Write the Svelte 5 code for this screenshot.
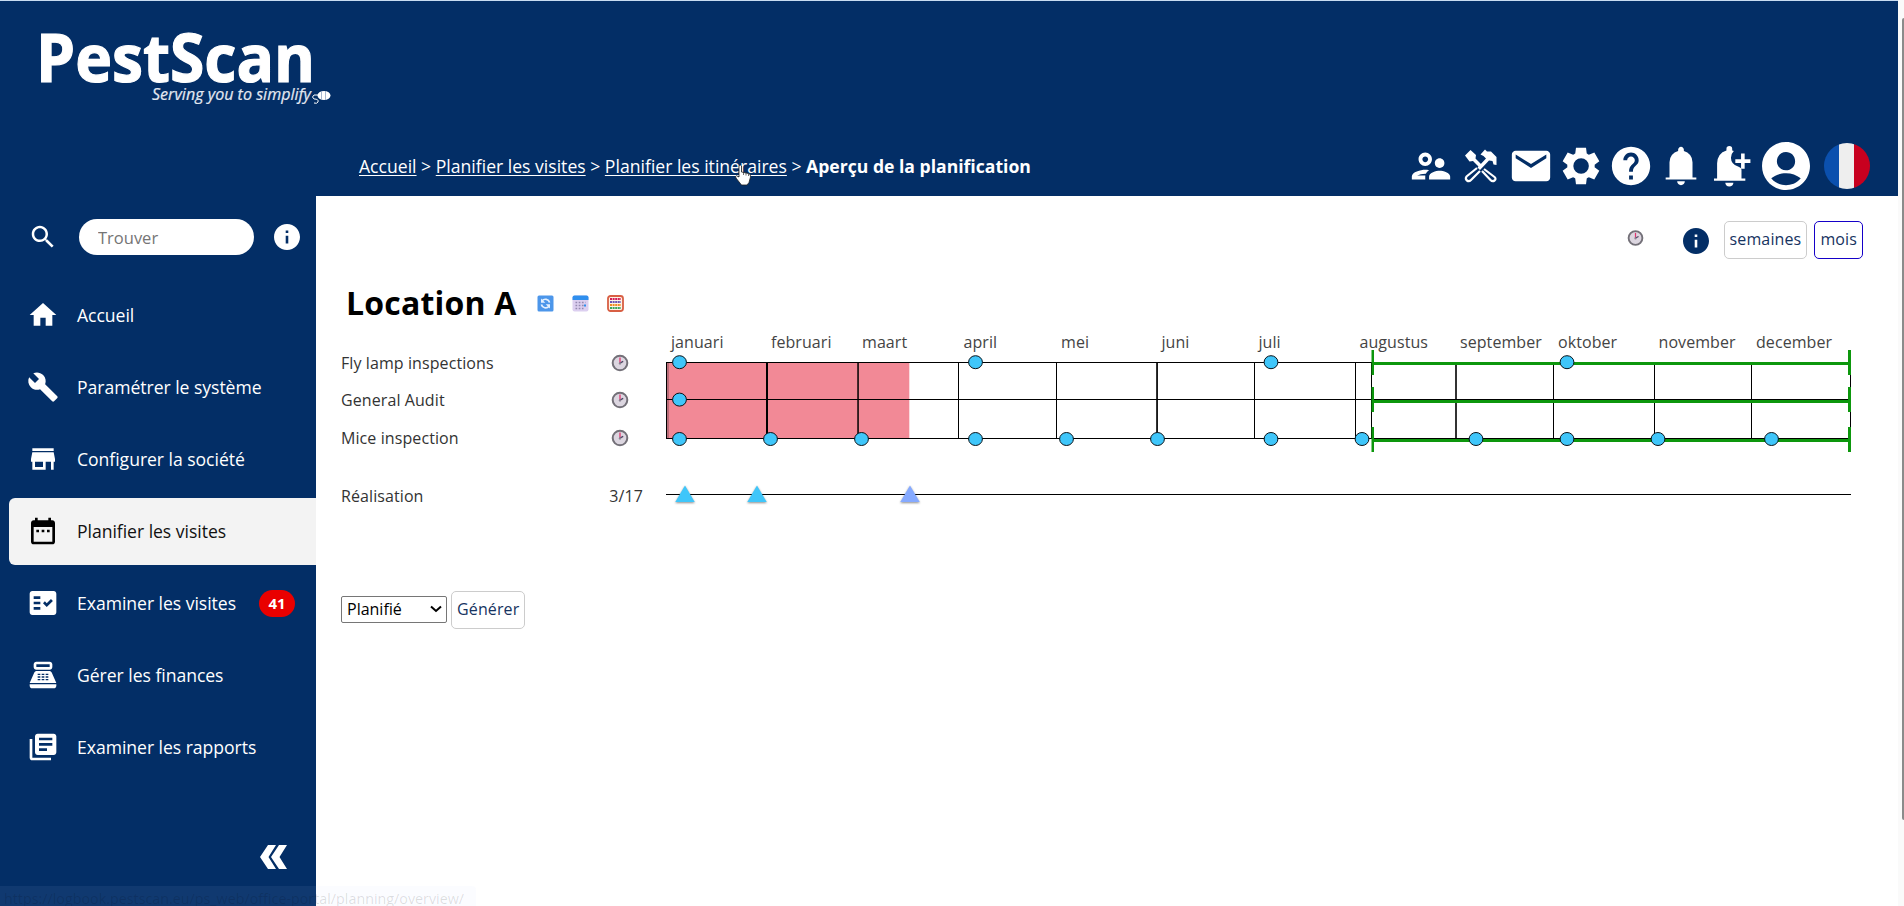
<script lang="ts">
  type NavItem = { label: string; icon: string; badge?: number; active?: boolean };

  const nav: NavItem[] = [
    { label: 'Accueil', icon: 'M10 20v-6h4v6h5v-8h3L12 3 2 12h3v8z' },
    {
      label: 'Paramétrer le système',
      icon: 'M22.7 19l-9.1-9.1c.9-2.3.4-5-1.5-6.9-2-2-5-2.4-7.4-1.3L9 6 6 9 1.6 4.7C.4 7.1.9 10.1 2.9 12.1c1.9 1.9 4.6 2.4 6.9 1.5l9.1 9.1c.4.4 1 .4 1.4 0l2.3-2.3c.5-.4.5-1.1.1-1.4z',
    },
    {
      label: 'Configurer la société',
      icon: 'M20 4H4v2h16V4zm1 10v-2l-1-5H4l-1 5v2h1v6h10v-6h4v6h2v-6h1zm-9 4H6v-4h6v4z',
    },
    {
      label: 'Planifier les visites',
      icon: 'M19 4h-1V2h-2v2H8V2H6v2H5c-1.11 0-1.99.9-1.99 2L3 20c0 1.1.89 2 2 2h14c1.1 0 2-.9 2-2V6c0-1.1-.9-2-2-2zm0 16H5V9h14v11zM9 11H7v2h2v-2zm4 0h-2v2h2v-2zm4 0h-2v2h2v-2z',
      active: true,
    },
    {
      label: 'Examiner les visites',
      icon: 'M20 3H4c-1.1 0-2 .9-2 2v14c0 1.1.9 2 2 2h16c1.1 0 2-.9 2-2V5c0-1.1-.9-2-2-2zM10 17H5v-2h5v2zm0-4H5v-2h5v2zm0-4H5V7h5v2zm4.82 6L12 12.16l1.41-1.41 1.41 1.42L17.99 9l1.42 1.42L14.82 15z',
      badge: 41,
    },
    {
      label: 'Gérer les finances',
      icon: 'M17 2H7c-1.1 0-2 .9-2 2v2c0 1.1.9 2 2 2h10c1.1 0 2-.9 2-2V4c0-1.1-.9-2-2-2zm0 4H7V4h10v2zm3 16H4c-1.1 0-2-.9-2-2v-1h20v1c0 1.1-.9 2-2 2zm-1.47-11.81C18.21 9.47 17.49 9 16.7 9H7.3c-.79 0-1.51.47-1.83 1.19L2 18h20l-3.47-7.81zM10 16H8v-1h2zm0-2H8v-1h2zm0-2H8v-1h2zm3 4h-2v-1h2zm0-2h-2v-1h2zm0-2h-2v-1h2zm3 4h-2v-1h2zm0-2h-2v-1h2zm0-2h-2v-1h2z',
    },
    {
      label: 'Examiner les rapports',
      icon: 'M4 6H2v14c0 1.1.9 2 2 2h14v-2H4V6zm16-4H8c-1.1 0-2 .9-2 2v12c0 1.1.9 2 2 2h12c1.1 0 2-.9 2-2V4c0-1.1-.9-2-2-2zm-1 9H9V9h10v2zm-4 4H9v-2h6v2zm4-8H9V5h10v2z',
    },
  ];

  const crumbs = ['Accueil', 'Planifier les visites', 'Planifier les itinéraires'];
  const tasks = ['Fly lamp inspections', 'General Audit', 'Mice inspection'];

  // Chart coordinates are relative to the left edge of the timeline
  const months = [
    { name: 'januari', x: 0, label: 5, w: 1 },
    { name: 'februari', x: 100, label: 105, w: 2 },
    { name: 'maart', x: 191.3, label: 196, w: 1.5 },
    { name: 'april', x: 292, label: 297.5, w: 1 },
    { name: 'mei', x: 390, label: 395, w: 1 },
    { name: 'juni', x: 490.2, label: 495.5, w: 1.7 },
    { name: 'juli', x: 588, label: 592.5, w: 1 },
    { name: 'augustus', x: 689, label: 693.5, w: 1 },
    { name: 'september', x: 789.2, label: 794, w: 1.6 },
    { name: 'oktober', x: 887, label: 892, w: 1 },
    { name: 'november', x: 988, label: 992.5, w: 1 },
    { name: 'december', x: 1085, label: 1090, w: 1 },
  ];

  const visits = [
    { y: 37.2, at: [13.5, 309.5, 605, 901] },
    { y: 74.6, at: [13.5] },
    { y: 114, at: [13.5, 104.5, 195.5, 309.5, 400.5, 491.5, 605, 696, 810, 901, 992, 1105.5] },
  ];

  const periods = [
    { bar: 37, cap: 25 },
    { bar: 75, cap: 62 },
    { bar: 114, cap: 102 },
  ];

  const done = [
    { x: 19, fill: '#3fc6fa' },
    { x: 91, fill: '#3fc6fa' },
    { x: 244, fill: '#86aaff' },
  ];

  let query = $state('');
  let view = $state('mois');
</script>

{#snippet clock()}
  <svg class="clock" viewBox="0 0 18 18" aria-hidden="true">
    <circle cx="9" cy="9" r="7.3" fill="#dcd6e0" stroke="#737078" stroke-width="2" />
    <path d="M9 9V3.500" stroke="#e0356f" stroke-width="1.300" />
    <path d="M9 9l3.200-1.600" stroke="#4a4060" stroke-width="1.300" />
    <circle cx="9" cy="9.400" r="1.200" fill="#8c8494" />
  </svg>
{/snippet}

{#snippet info()}
  <svg class="info" viewBox="2 2 20 20">
    <path d="M12 2C6.480 2 2 6.480 2 12s4.480 10 10 10 10-4.480 10-10S17.520 2 12 2zm1 15h-2v-6h2v6zm0-8h-2V7h2v2z" />
  </svg>
{/snippet}

<div class="app">
  <div class="page">
    <header>
      <svg class="logo" width="340" height="110" viewBox="0 0 340 110" aria-label="PestScan">
        <text class="brand" x="36" y="80.500" textLength="279" lengthAdjust="spacingAndGlyphs">PestScan</text>
        <text class="tagline" x="152" y="99" textLength="159" lengthAdjust="spacingAndGlyphs">Serving you to simplify</text>
        <path d="M318 94h-4q-3 2 0 4 5 0 4 3-1 2-4 1" fill="none" stroke="#fff" stroke-width="1" />
        <ellipse cx="324" cy="94.500" rx="6.500" ry="4.600" fill="#fff" />
        <path d="M321.500 90v9m4-9v9" stroke="#8ea3c0" stroke-width=".8" />
      </svg>

      <div class="bar">
        <nav class="crumbs">
          {#each crumbs as crumb}
            <a href="#top">{crumb}</a> &gt;{' '}
          {/each}
          <strong>Aperçu de la planification</strong>
        </nav>

        <div class="tools">
          <svg viewBox="0 0 24 24"><path d="M9 12c1.93 0 3.500-1.570 3.500-3.500S10.930 5 9 5 5.500 6.570 5.500 8.500 7.070 12 9 12zm0-5c.83 0 1.500.67 1.500 1.500S9.830 10 9 10s-1.500-.67-1.500-1.500S8.170 7 9 7zm.05 10H4.770c.99-.5 2.700-1 4.230-1 .11 0 .23.01.34.01.34-.73.93-1.330 1.640-1.810-.73-.13-1.420-.2-1.980-.2-2.340 0-7 1.170-7 3.500V19h7v-1.500c0-.17.02-.34.05-.5zm7.450-2.500c-1.840 0-5.500 1.010-5.500 3V19h11v-1.500c0-1.990-3.660-3-5.500-3zm1.210-1.820c.76-.43 1.290-1.240 1.290-2.180C19 9.120 17.880 8 16.500 8S14 9.120 14 10.500c0 .94.53 1.750 1.290 2.180.36.2.77.32 1.210.32s.85-.12 1.210-.32z" /></svg>
          <svg viewBox="0 0 46 46">
            <path d="M7 12.500l5.500-5.500 5.500 5-.5 3.500 7 7-2.500 2.500-7-7-3.500.5z" />
            <path d="M22.500 11.500l4.500-5 2 2h4l5.500 5.500V22l-3-.5-1-3.500-3.500-.5-9 9.500-2.500-2.500 8.500-9-2.500-2.500z" />
            <path d="M19 25L8.500 33.500Q7 36 9 37.500t4-.5L22 28M26 26l10.500 8q2 2 0 3.500t-4-.5L24 28" fill="none" stroke="#fff" stroke-width="2.200" stroke-linejoin="round" />
          </svg>
          <svg viewBox="0 0 24 24"><path d="M20 4H4c-1.100 0-1.990.9-1.990 2L2 18c0 1.100.9 2 2 2h16c1.100 0 2-.9 2-2V6c0-1.100-.9-2-2-2zm0 4l-8 5-8-5V6l8 5 8-5v2z" /></svg>
          <svg viewBox="-24 -984 1008 1008"><path d="m370-80-16-128q-13-5-24.500-12T307-235l-119 50L78-375l103-78q-1-7-1-13.500v-27q0-6.500 1-13.500L78-585l110-190 119 50q11-8 23-15t24-12l16-128h220l16 128q13 5 24.500 12t22.500 15l119-50 110 190-103 78q1 7 1 13.500v27q0 6.500-2 13.500l103 78-110 190-118-50q-11 8-23 15t-24 12L590-80H370Zm112-230q70 0 120-50t50-120q0-70-50-120t-120-50q-71 0-120.500 50T312-480q0 70 49.500 120t120.500 50Z" /></svg>
          <svg viewBox="0 0 24 24"><path d="M12 2C6.480 2 2 6.480 2 12s4.480 10 10 10 10-4.480 10-10S17.520 2 12 2zm1 17h-2v-2h2v2zm2.070-7.750l-.9.920C13.450 12.900 13 13.500 13 15h-2v-.5c0-1.100.450-2.100 1.170-2.830l1.240-1.260c.370-.360.590-.860.590-1.410 0-1.100-.9-2-2-2s-2 .9-2 2H8c0-2.210 1.790-4 4-4s4 1.790 4 4c0 .880-.360 1.680-.930 2.250z" /></svg>
          <svg viewBox="0 -960 960 960"><path d="M160-200v-40h80v-320q0-83 50-147.500T420-792v-28q0-25 17.500-42.500T480-880q25 0 42.500 17.500T540-820v28q80 20 130 84.500T720-560v320h80v40H160ZM480-80q-33 0-56.500-23.500T400-160h160q0 33-23.500 56.500T480-80Z" /></svg>
          <svg viewBox="0 -960 960 960">
            <path d="M140-170v-50h65v-320q0-90 50-165T400-805v-35q0-60 60-60t60 60v35q20 5 34 12-60 60-60 140 0 140 160 190 60 20 60 60v183h80v50H140ZM460-50q-40 0-60-23.500T375-130h170q0 33-25 56.500T460-50Z" transform="translate(-15)" />
            <path d="M690-740h75v120h120v75H765v120h-75v-120H570v-75h120z" />
          </svg>
          <svg class="account" viewBox="2 2 20 20"><path d="M12 2C6.480 2 2 6.480 2 12s4.480 10 10 10 10-4.480 10-10S17.520 2 12 2zm0 4.200c2.100 0 3.800 1.600 3.800 3.800s-1.700 3.800-3.800 3.800-3.800-1.700-3.800-3.800 1.700-3.800 3.800-3.800zm0 13.800c-2.030 0-4.430-.7-6.140-2.880C7.550 15.800 9.680 15 12 15s4.450.8 6.140 2.120C16.430 19.300 14.030 20 12 20z" /></svg>
          <span class="flag" aria-label="Français"></span>
        </div>
      </div>
    </header>

    <div class="body">
      <aside>
        <div class="search">
          <svg class="lens" viewBox="0 0 24 24"><path d="M15.500 14h-.790l-.280-.270C15.410 12.590 16 11.110 16 9.500 16 5.910 13.090 3 9.500 3S3 5.910 3 9.500 5.910 16 9.500 16c1.610 0 3.090-.590 4.230-1.570l.270.280v.790l5 4.990L20.490 19l-4.990-5zm-6 0C7.010 14 5 11.990 5 9.500S7.010 5 9.500 5 14 7.010 14 9.500 11.990 14 9.500 14z" /></svg>
          <input type="text" placeholder="Trouver" bind:value={query} />
          {@render info()}
        </div>

        <ul>
          {#each nav as item}
            <li class:active={item.active}>
              <svg viewBox="0 0 24 24"><path d={item.icon} /></svg>
              <span>{item.label}</span>
              {#if item.badge}<b class="badge">{item.badge}</b>{/if}
            </li>
          {/each}
        </ul>

        <svg class="collapse" viewBox="0 0 27 24"><path d="M8 0h8L8.500 12l7.500 12H8L0 12zM19 0h8l-7.500 12L27 24h-8l-8-12z" /></svg>
      </aside>

      <main>
        <div class="view">
          {@render clock()}
          {@render info()}
          <button class:selected={view === 'semaines'} onclick={() => (view = 'semaines')}>semaines</button>
          <button class:selected={view === 'mois'} onclick={() => (view = 'mois')}>mois</button>
        </div>

        <div class="title">
          <h1>Location A</h1>
          <svg viewBox="0 0 17 17">
            <rect x=".5" y=".5" width="16" height="16" rx="1.500" fill="#4c96ea" />
            <path d="M12.600 7.500A4.300 4.300 0 0 0 5 6M4.400 9.500A4.300 4.300 0 0 0 12 11.200" fill="none" stroke="#e4f0ff" stroke-width="1.700" />
            <path d="M4 3.500v4.300h4.300zM13 13.500V9.200H8.700z" fill="#e4f0ff" />
          </svg>
          <svg viewBox="0 0 17 17">
            <rect x=".5" y=".5" width="16" height="16" rx="2" fill="#dccff0" />
            <path d="M.5 5V2.500q0-2 2-2h12q2 0 2 2V5z" fill="#2f8fee" />
            <path d="M3.500 7.500h10M3.500 10.500h10M3.500 13.500h8" stroke="#958ab0" stroke-width="1.600" stroke-dasharray="1.700 1.500" />
            <path d="M12 9.500h2v2h-2z" fill="#2f8fee" />
          </svg>
          <svg viewBox="0 0 17 17">
            <rect x="1" y="1" width="15" height="15" rx="2.500" fill="#fff3e6" stroke="#d85f44" stroke-width="1.800" />
            <path d="M3 4h11" stroke="#d51c55" stroke-width="2" stroke-dasharray="2 .6" />
            <path d="M3 7h11" stroke="#6b54b5" stroke-width="2" stroke-dasharray="2 .6" />
            <path d="M3 10h11" stroke="#f08b22" stroke-width="2" stroke-dasharray="2 .6" />
            <path d="M3 13h11" stroke="#3aa65c" stroke-width="2" stroke-dasharray="2 .6" />
          </svg>
        </div>

        <div class="plan">
          <div class="tasks">
            {#each tasks as task}
              <div class="task"><span>{task}</span>{@render clock()}</div>
            {/each}
            <div class="task total"><span>Réalisation</span><span>3/17</span></div>
          </div>

          <svg class="chart" width="1187" height="190" viewBox="0 0 1187 190">
            <rect x="1" y="38" width="242.300" height="75" fill="#f28996" />
            <rect x="1" y="38" width="2" height="75" fill="#b86d78" />

            {#each months as m}
              <text x={m.label} y="23">{m.name}</text>
              <rect x={m.x} y="37" width={m.w} height="77" />
            {/each}
            <rect x="1184" y="37" width="1" height="77" />
            <rect x="705" y="37" width="1" height="77" />
            <rect y="37" width="1185" height="1" />
            <rect y="74" width="1185" height="1" />
            <rect y="113" width="1185" height="1" />

            {#each periods as p}
              <g class="period">
                <rect x="706" y={p.bar} width="478" height="3" />
                <rect x="705.500" y={p.cap} width="2.500" height="25" />
                <rect x="1182" y={p.cap} width="3" height="25" />
              </g>
            {/each}

            {#each visits as row}
              {#each row.at as x}
                <ellipse cx={x} cy={row.y} rx="6.900" ry="6.500" fill="#3fc6fa" stroke="#08131a" stroke-width="1" />
              {/each}
            {/each}

            <rect y="169" width="1185" height="1" />
            {#each done as d}
              <path class="done" d="M{d.x} 160.500l9.700 16.500h-19.400z" fill={d.fill} />
            {/each}
          </svg>
        </div>

        <div class="generate">
          <div class="select"><span>Planifié</span><svg viewBox="0 0 12 8"><path d="M1 1.500l5 4.500 5-4.500" /></svg></div>
          <button>Générer</button>
        </div>
      </main>
    </div>
  </div>

  <div class="scrollbar"><i></i></div>

  <svg class="pointer" viewBox="0 0 18 22">
    <path d="M5 1.500q1.500-1 2.500.5V8l7 1.500q2.500.5 2 3.500l-1.500 5.500L13 21H7.500L2 14q-1-2 .5-2.300L5 13z" fill="#fff" stroke="#222" stroke-width=".8" />
    <path d="M9.500 8v3M12 8.500v3M14.500 9.500v2.500" stroke="#333" stroke-width=".7" />
  </svg>
  <div class="status">https://logbook.pestscan.eu/ps_web/office-portal/planning/overview/</div>
</div>

<style>
  :global(body) {
    margin: 0;
    overflow: hidden;
  }

  .app {
    position: relative;
    display: flex;
    width: 1904px;
    height: 906px;
    overflow: hidden;
    font-family: 'Open Sans', 'Noto Sans', sans-serif;
    background: #fff;
  }

  .page {
    display: flex;
    flex: 1;
    flex-direction: column;
    min-width: 0;
  }

  header {
    box-sizing: border-box;
    height: 196px;
    border-top: 1px solid #c9dcf2;
    background: #032e66;
    color: #fff;
  }

  svg {
    display: block;
    flex: none;
  }

  .brand {
    font-size: 66px;
    font-weight: 700;
    fill: #fff;
    stroke: #fff;
    stroke-width: 1.2;
  }

  .tagline {
    font-size: 17px;
    font-style: italic;
    fill: #e4e9f2;
    stroke: #e4e9f2;
    stroke-width: 0.2;
  }

  .bar {
    display: flex;
    align-items: center;
    justify-content: space-between;
    height: 58px;
    margin-top: 26px;
    padding: 0 28px 0 359px;
  }

  .crumbs {
    font-size: 17.6px;
    white-space: nowrap;
  }

  .crumbs a {
    color: inherit;
    text-underline-offset: 2px;
  }

  .tools {
    display: flex;
    align-items: center;
    gap: 4px;
    fill: #fff;
  }

  .tools svg {
    width: 46px;
    height: 46px;
  }

  .tools .account {
    width: 48px;
    height: 48px;
    margin-left: 4px;
  }

  .flag {
    width: 46px;
    height: 46px;
    margin-left: 10px;
    border-radius: 50%;
    background: linear-gradient(90deg, #0b50ae 33%, #eee 33% 66%, #c8001f 66%);
  }

  .body {
    display: flex;
    flex: 1;
    min-height: 0;
  }

  aside {
    display: flex;
    flex-direction: column;
    width: 316px;
    background: #032e66;
    color: #fff;
    fill: #fff;
  }

  .search {
    display: flex;
    align-items: center;
    height: 36px;
    margin-top: 23px;
    padding-left: 28px;
  }

  .lens {
    width: 30px;
    height: 30px;
  }

  .search input {
    box-sizing: border-box;
    width: 175px;
    height: 36px;
    margin: 0 20px 0 21px;
    padding: 1px 19px;
    border: 0;
    border-radius: 18px;
    font: 16.5px 'Open Sans', sans-serif;
  }

  .search input::placeholder {
    color: #757575;
  }

  .info {
    width: 26px;
    height: 26px;
  }

  ul {
    display: flex;
    flex-direction: column;
    gap: 5px;
    margin: 27px 0 0 9px;
    padding: 0;
    list-style: none;
  }

  li {
    display: flex;
    align-items: center;
    height: 67px;
    padding-left: 18px;
    border-radius: 6px 0 0 6px;
    font-size: 17.6px;
    letter-spacing: -0.04px;
  }

  li svg {
    width: 32px;
    height: 32px;
    margin-right: 18px;
  }

  li span,
  li svg {
    margin-top: -1px;
  }

  li.active {
    background: #f3f3f3;
    color: #111;
    fill: #000;
  }

  .badge {
    width: 36px;
    height: 27px;
    margin: -1px 21px 0 auto;
    border-radius: 14px;
    background: #e90000;
    font-size: 15px;
    line-height: 26px;
    text-align: center;
  }

  .collapse {
    width: 27px;
    height: 24px;
    margin: 64px 0 0 260px;
  }

  main {
    flex: 1;
    min-width: 0;
    color: #333;
    font-size: 16px;
  }

  .view {
    display: flex;
    align-items: center;
    height: 38px;
    margin-top: 25px;
    padding-right: 35px;
    justify-content: flex-end;
  }

  .clock {
    width: 18px;
    height: 18px;
  }

  .view .clock {
    width: 17px;
    margin: -5px 39px 0 0;
  }

  .view .info {
    margin: 2px 15px 0 0;
    fill: #032e66;
  }

  button {
    box-sizing: border-box;
    height: 38px;
    padding: 0 5px 2px;
    border: 1px solid #ccc;
    border-radius: 5px;
    background: #fff;
    color: #16335f;
    font: 16px 'Open Sans', sans-serif;
    letter-spacing: 0.13px;
  }

  .view button + button {
    margin-left: 7px;
  }

  button.selected {
    border-color: #1500c8;
  }

  .title {
    display: flex;
    align-items: center;
    gap: 18px;
    height: 44px;
    margin: 22px 0 0 30px;
  }

  h1 {
    margin: 0 2px 0 0;
    color: #000;
    font-size: 32px;
    line-height: 44px;
    letter-spacing: 0.2px;
  }

  .title svg {
    width: 17px;
    height: 17px;
  }

  .plan {
    display: flex;
    margin-left: 25px;
  }

  .tasks {
    width: 325px;
    padding-top: 19px;
    letter-spacing: 0.09px;
  }

  .task {
    display: flex;
    align-items: center;
    justify-content: space-between;
    height: 37.6px;
    padding-right: 37px;
  }

  .total {
    margin-top: 20px;
    padding-right: 23px;
  }

  .chart text {
    font-size: 16px;
    letter-spacing: 0.07px;
    fill: #444;
  }

  .period {
    fill: #0d970d;
  }

  .done {
    filter: drop-shadow(0 1px 1px rgba(0, 0, 0, 0.45));
  }

  .generate {
    display: flex;
    align-items: center;
    gap: 4px;
    margin: 76px 0 0 25px;
  }

  .select {
    box-sizing: border-box;
    display: flex;
    align-items: center;
    justify-content: space-between;
    width: 106px;
    height: 27px;
    margin-top: -1px;
    padding: 0 4px 1px 5px;
    border: 1px solid #767676;
    border-radius: 2px;
    color: #000;
  }

  .select svg {
    width: 12px;
    height: 8px;
    fill: none;
    stroke: #000;
    stroke-width: 2;
  }

  .scrollbar {
    box-sizing: border-box;
    width: 6px;
    padding: 18px 0 0 4px;
    background: #fafafa;
  }

  .scrollbar i {
    display: block;
    height: 802px;
    border-radius: 2px 0 0 2px;
    background: #8b8b8b;
  }

  .pointer {
    position: absolute;
    left: 734px;
    top: 164px;
    width: 18px;
    height: 22px;
  }

  .status {
    position: absolute;
    left: 0;
    bottom: 0;
    box-sizing: border-box;
    width: 476px;
    height: 20px;
    padding-left: 4px;
    overflow: hidden;
    border-radius: 0 4px 0 0;
    background: rgba(200, 215, 255, 0.07);
    color: rgba(0, 0, 0, 0.13);
    font-size: 14.3px;
    line-height: 26px;
    white-space: nowrap;
  }
</style>
